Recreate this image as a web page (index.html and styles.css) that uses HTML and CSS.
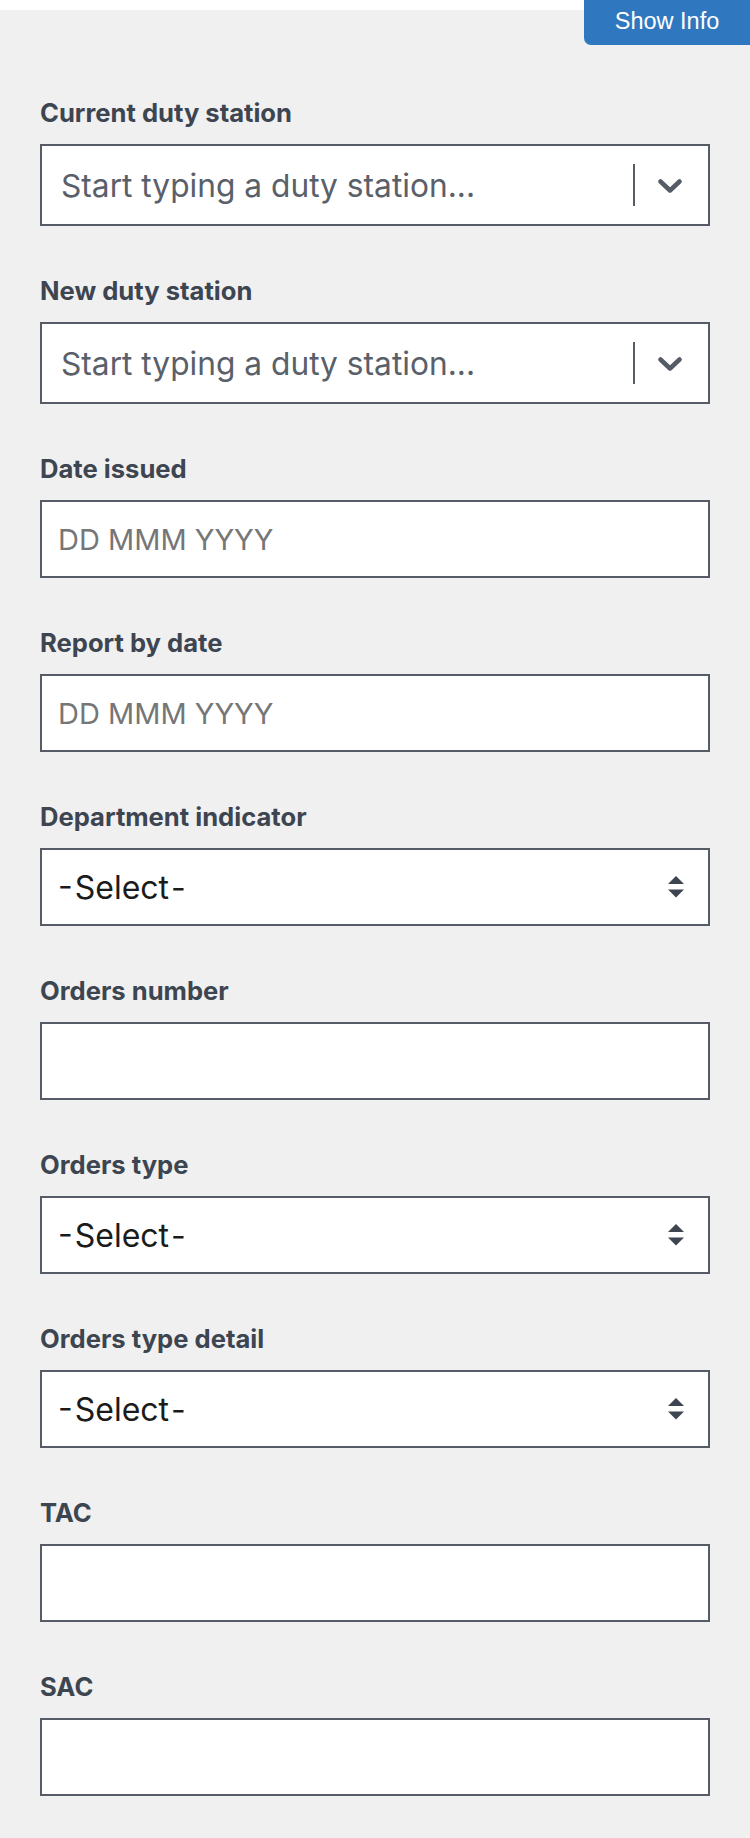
FILE: index.html
```html
<!DOCTYPE html>
<html lang="en">
<head>
<meta charset="utf-8">
<title>Orders</title>
<link rel="stylesheet" href="styles.css">
</head>
<body>
<div class="page">
  <div class="topbar"></div>
  <button class="show-info" type="button">Show Info</button>
  <form class="form">
    <div class="field">
      <label class="label">Current duty station</label>
      <div class="combo">
        <span class="combo-placeholder">Start typing a duty station...</span>
        <span class="combo-sep"></span>
        <span class="combo-ind"><svg width="24" height="14" viewBox="0 0 24 14"><polyline points="2.5,2.5 12,11.5 21.5,2.5" fill="none" stroke="#565c65" stroke-width="4.5" stroke-linecap="round" stroke-linejoin="round"/></svg></span>
      </div>
    </div>
    <div class="field">
      <label class="label">New duty station</label>
      <div class="combo">
        <span class="combo-placeholder">Start typing a duty station...</span>
        <span class="combo-sep"></span>
        <span class="combo-ind"><svg width="24" height="14" viewBox="0 0 24 14"><polyline points="2.5,2.5 12,11.5 21.5,2.5" fill="none" stroke="#565c65" stroke-width="4.5" stroke-linecap="round" stroke-linejoin="round"/></svg></span>
      </div>
    </div>
    <div class="field">
      <label class="label">Date issued</label>
      <input class="input date" type="text" placeholder="DD MMM YYYY">
    </div>
    <div class="field">
      <label class="label">Report by date</label>
      <input class="input date" type="text" placeholder="DD MMM YYYY">
    </div>
    <div class="field">
      <label class="label">Department indicator</label>
      <div class="select"><span class="select-value">- Select -</span><svg class="select-arrows" width="16" height="22" viewBox="0 0 16 22"><path d="M8 0 L16 8 H0 Z M0 13.5 H16 L8 21.5 Z" fill="#3d4551"/></svg></div>
    </div>
    <div class="field">
      <label class="label">Orders number</label>
      <input class="input" type="text">
    </div>
    <div class="field">
      <label class="label">Orders type</label>
      <div class="select"><span class="select-value">- Select -</span><svg class="select-arrows" width="16" height="22" viewBox="0 0 16 22"><path d="M8 0 L16 8 H0 Z M0 13.5 H16 L8 21.5 Z" fill="#3d4551"/></svg></div>
    </div>
    <div class="field">
      <label class="label">Orders type detail</label>
      <div class="select"><span class="select-value">- Select -</span><svg class="select-arrows" width="16" height="22" viewBox="0 0 16 22"><path d="M8 0 L16 8 H0 Z M0 13.5 H16 L8 21.5 Z" fill="#3d4551"/></svg></div>
    </div>
    <div class="field">
      <label class="label">TAC</label>
      <input class="input" type="text">
    </div>
    <div class="field">
      <label class="label">SAC</label>
      <input class="input" type="text">
    </div>
  </form>
</div>
</body>
</html>
```

FILE: styles.css
```css
html, body {
  margin: 0;
  padding: 0;
}

body {
  background: #f0f0f0;
  font-family: Inter, "Noto Sans", sans-serif;
}

.page {
  position: relative;
}

.topbar {
  height: 10px;
  background: #ffffff;
}

.show-info {
  position: absolute;
  top: 0;
  right: 0;
  width: 166px;
  height: 45px;
  box-sizing: border-box;
  padding: 0 0 2px;
  border: 0;
  border-radius: 0 0 0 7px;
  background: #2f78bf;
  color: #ffffff;
  font-family: "Liberation Sans", Arial, sans-serif;
  font-size: 23.5px;
  line-height: 43px;
  cursor: pointer;
}

.form {
  padding: 88px 40px 0;
}

.field {
  margin-bottom: 50px;
}

.label {
  display: block;
  margin-bottom: 16px;
  font-size: 25.6px;
  font-weight: 700;
  line-height: 30px;
  color: #3d4551;
}

.combo {
  display: flex;
  align-items: center;
  height: 82px;
  box-sizing: border-box;
  border: 2px solid #565c65;
  background: #ffffff;
}

.combo-placeholder {
  flex: 1;
  padding-left: 19px;
  font-size: 31.7px;
  color: #5a606a;
  white-space: nowrap;
}

.combo-sep {
  width: 2px;
  height: 42px;
  background: #565c65;
}

.combo-ind {
  display: flex;
  padding: 2px 26px 0 23px;
}

.input {
  display: block;
  width: 100%;
  height: 78px;
  box-sizing: border-box;
  margin: 0;
  padding: 0 16px;
  border: 2px solid #565c65;
  border-radius: 0;
  background: #ffffff;
  font-family: inherit;
  font-size: 29px;
  color: #1b1b1b;
  outline: none;
}

.input::placeholder {
  color: #767676;
}

.select {
  display: flex;
  align-items: center;
  justify-content: space-between;
  height: 78px;
  box-sizing: border-box;
  padding: 0 24px 0 16px;
  border: 2px solid #565c65;
  background: #ffffff;
}

.select-value {
  font-size: 32px;
  color: #1b1b1b;
  word-spacing: -7px;
}

.select-arrows {
  display: block;
}
```
